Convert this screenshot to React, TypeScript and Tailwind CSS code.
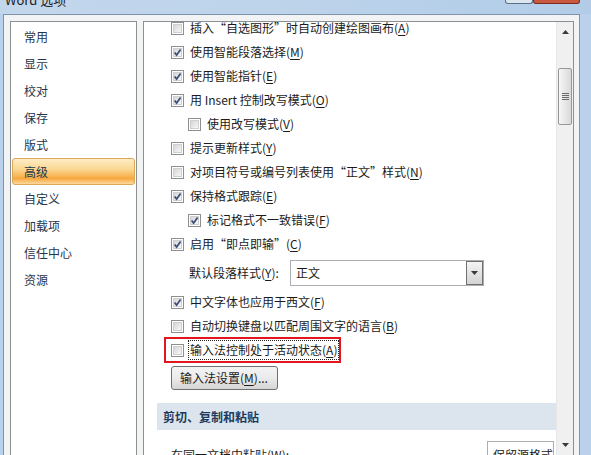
import clsx from 'clsx'
import type { ReactNode } from 'react'

const nav = ['常用', '显示', '校对', '保存', '版式', '高级', '自定义', '加载项', '信任中心', '资源']

function Check({ on }: { on?: boolean }) {
  return (
    <span className="relative flex h-[13px] w-[13px] shrink-0 items-center justify-center border border-[#8f8f8f] bg-white">
      <span className="h-[9px] w-[9px] border border-[#cfcfcf] bg-linear-to-br from-[#d6d6d6] to-[#f7f7f7]" />
      {on && (
        <svg viewBox="0 0 13 13" className="absolute -left-px -top-px h-[13px] w-[13px]">
          <path d="M3.6 6.4 5.6 9 9.6 3.6" fill="none" stroke="#3b4c78" strokeWidth="1.7" />
        </svg>
      )}
    </span>
  )
}

function K({ k }: { k: string }) {
  return (
    <>
      (<span className="underline underline-offset-2">{k}</span>)
    </>
  )
}

function Row({ on, sub, children }: { on?: boolean; sub?: boolean; children: ReactNode }) {
  return (
    <div className={clsx('flex h-[24px] shrink-0 items-center gap-[6px]', sub ? 'pl-[44px]' : 'pl-[27px]')}>
      <Check on={on} />
      <span className="whitespace-nowrap">{children}</span>
    </div>
  )
}

function Arrow({ down }: { down?: boolean }) {
  return (
    <svg viewBox="0 0 7 4" className="h-[4px] w-[7px]">
      <path d={down ? 'M0 0h7L3.5 4z' : 'M0 4h7L3.5 0z'} fill="#3a3a3a" />
    </svg>
  )
}

export default function App() {
  return (
    <div className="flex h-[455px] w-[591px] flex-col overflow-hidden bg-[#b9d1ea] font-['Noto_Sans_CJK_SC','Noto_Sans',sans-serif] text-[12px] leading-none text-[#1b1b1b]">
      {/* title bar */}
      <div className="flex h-[14px] shrink-0 overflow-hidden bg-linear-to-r from-[#c3d7ec] via-[#bcd3ea] to-[#b2cce8]">
        <span className="-mt-[7px] pl-[5px] text-[13px] leading-[13px] text-[#1c1c1c]">Word 选项</span>
        <div className="ml-auto mr-[11px] flex items-start">
          <div className="h-[4px] w-[28px] rounded-b-[3px] border border-t-0 border-[#5e7088] bg-[#dbe5f0]" />
          <div className="h-[4px] w-[47px] rounded-b-[3px] border border-t-0 border-[#7b2c20] bg-[#c9583f]" />
        </div>
      </div>

      {/* body */}
      <div className="flex min-h-0 flex-1 pl-[3px] pr-[11px]">
        <div className="flex flex-1 gap-[6px] border-x border-t border-[#7f93ab] bg-[#f1f3f5] pl-[6px] pr-[5px] pt-[6px]">
          {/* left nav */}
          <div className="w-[127px] shrink-0 border border-b-0 border-[#8e8f8f] bg-white pt-px">
            {nav.map((n) => (
              <div
                key={n}
                className={clsx(
                  'mx-px flex h-[27px] items-center border pl-[11px] text-[#27354a]',
                  n === '高级'
                    ? 'rounded-[3px] border-[#d9a85b] bg-[linear-gradient(to_bottom,#fdecc4_0%,#fbd895_40%,#f7a940_78%,#fcd9a0_100%)] text-[#1b1b1b]'
                    : 'border-transparent',
                )}
              >
                {n}
              </div>
            ))}
          </div>

          {/* options */}
          <div className="flex min-w-0 flex-1 overflow-hidden border border-b-0 border-[#8e8f8f] bg-white">
            <div className="flex min-w-0 flex-1 flex-col">
              <div className="-mt-[6px]" />
              <Row>插入“自选图形”时自动创建绘图画布<K k="A" /></Row>
              <Row on>使用智能段落选择<K k="M" /></Row>
              <Row on>使用智能指针<K k="E" /></Row>
              <Row on>用 Insert 控制改写模式<K k="O" /></Row>
              <Row sub>使用改写模式<K k="V" /></Row>
              <Row>提示更新样式<K k="Y" /></Row>
              <Row>对项目符号或编号列表使用“正文”样式<K k="N" /></Row>
              <Row on>保持格式跟踪<K k="E" /></Row>
              <Row on sub>标记格式不一致错误<K k="F" /></Row>
              <Row on>启用“即点即输”<K k="C" /></Row>

              <div className="flex h-[34px] shrink-0 items-center pl-[45px]">
                <span className="w-[101px] whitespace-nowrap">默认段落样式<K k="Y" />:</span>
                <div className="flex h-[26px] w-[194px] items-center border border-[#abadb3] pl-[5px]">
                  <span>正文</span>
                  <div className="ml-auto flex h-[24px] w-[17px] items-center justify-center border border-[#707070] bg-linear-to-b from-[#f4f4f4] to-[#d4d4d4]">
                    <Arrow down />
                  </div>
                </div>
              </div>

              <Row on>中文字体也应用于西文<K k="F" /></Row>
              <Row>自动切换键盘以匹配周围文字的语言<K k="B" /></Row>

              <div className="-my-px ml-[20px] flex h-[26px] w-fit shrink-0 items-center gap-[4px] border-2 border-[#e2161d] pl-[5px]">
                <Check />
                <span className="flex h-[20px] items-center whitespace-nowrap border border-dotted border-[#222] px-px">
                  输入法控制处于活动状态<K k="A" />
                </span>
              </div>

              <div className="flex h-[32px] shrink-0 items-start pl-[27px] pt-[4px]">
                <button className="flex h-[24px] w-[107px] items-center rounded-[3px] border border-[#707070] bg-linear-to-b from-[#f3f3f3] via-[#ebebeb] to-[#d5d5d5] pl-[8px] text-[12px]">
                  输入法设置<K k="M" />...
                </button>
              </div>

              <div className="ml-[13px] mt-[9px] flex h-[27px] shrink-0 items-center bg-[#dce5ee] pl-[6px] font-bold text-[#1e3a5c]">
                剪切、复制和粘贴
              </div>

              <div className="flex shrink-0 items-start pl-[27px] pt-[11px]">
                <span className="mt-[8px] whitespace-nowrap">在同一文档中粘贴<K k="W" />:</span>
                <div className="ml-auto mr-[2px] flex h-[26px] w-[67px] items-start overflow-hidden whitespace-nowrap border border-[#abadb3] pl-[5px] pt-[7px]">
                  保留源格式(
                </div>
              </div>
            </div>

            {/* scrollbar */}
            <div className="flex w-[17px] shrink-0 flex-col items-center border-l border-[#e6e6e6] bg-[#f0f0f0]">
              <div className="pt-[8px]">
                <Arrow />
              </div>
              <div className="mt-[34px] flex h-[57px] w-[14px] flex-col items-center justify-center gap-px rounded-[2px] border border-[#979797] bg-linear-to-r from-[#f6f6f6] to-[#d9d9d9]">
                <span className="h-px w-[7px] bg-[#6a6a6a]" />
                <span className="h-px w-[7px] bg-[#6a6a6a]" />
                <span className="h-px w-[7px] bg-[#6a6a6a]" />
                <span className="h-px w-[7px] bg-[#6a6a6a]" />
              </div>
              <div className="mb-[8px] mt-auto">
                <Arrow down />
              </div>
            </div>
          </div>
        </div>
      </div>
    </div>
  )
}
